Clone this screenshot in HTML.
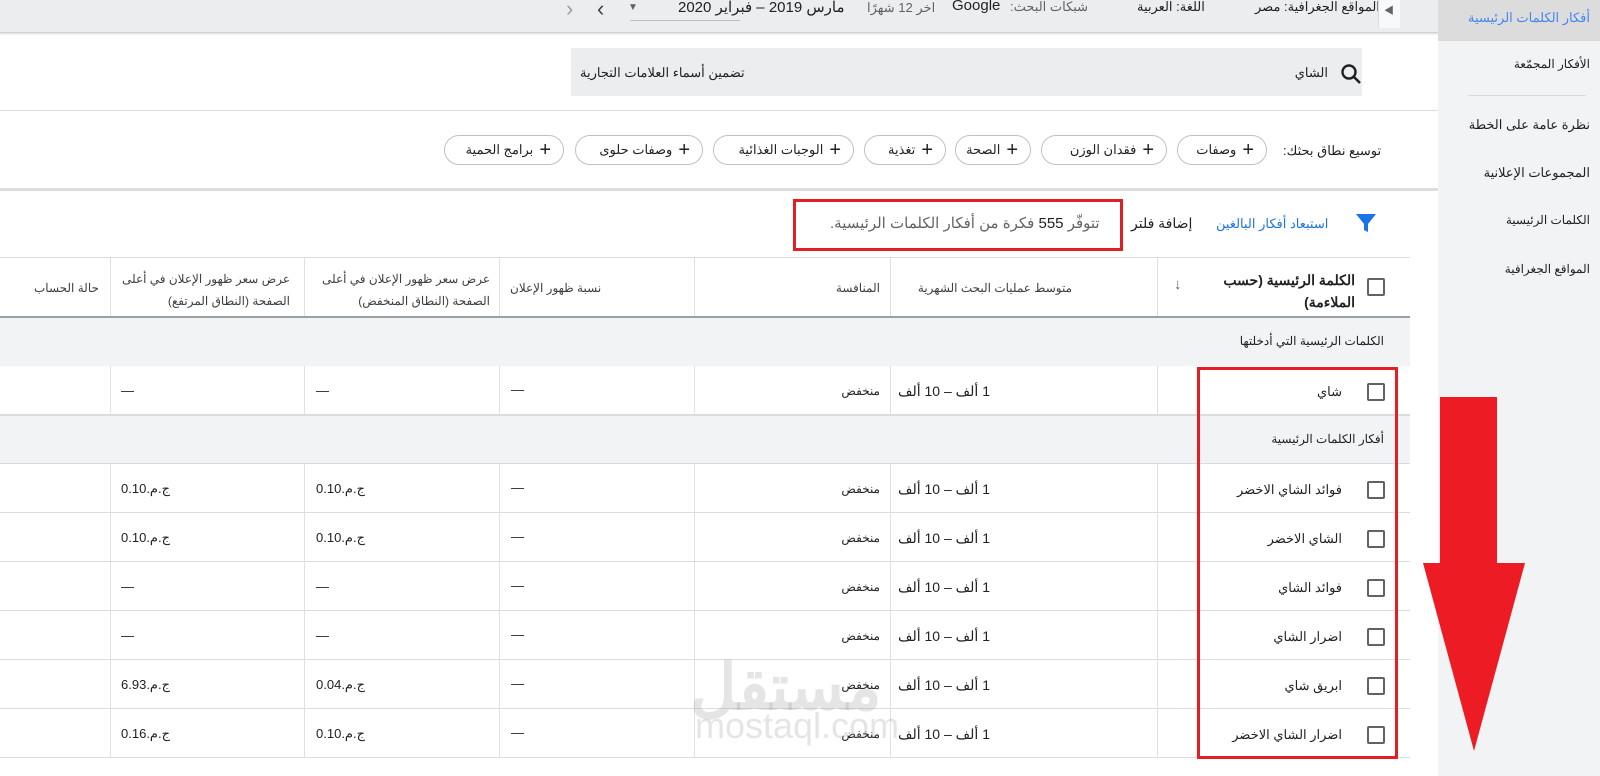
<!DOCTYPE html>
<html><head><meta charset="utf-8"><style>
*{margin:0;padding:0;box-sizing:border-box}
body{width:1600px;height:776px;overflow:hidden;background:#f1f3f4;font-family:"Liberation Sans","Noto Sans CJK SC",sans-serif;color:#202124;position:relative}
.a{position:absolute}
.t{position:absolute;white-space:nowrap;direction:rtl;font-size:13px}
.hl{position:absolute;height:1px;background:#dadce0}
.vl{position:absolute;width:1px;background:#e0e0e0}
.cb{position:absolute;width:18px;height:18px;border:2px solid #5f6368;border-radius:2px;background:#fff}
.chip{position:absolute;height:30px;top:135px;border:1px solid #bdc1c6;border-radius:16px;background:#fff;font-size:13px;direction:rtl;padding:0 12px;line-height:28px;white-space:nowrap}
.chip b{font-size:20px;font-weight:normal;margin-left:6px;vertical-align:-2px}
</style></head><body>
<div class="a" style="left:0;top:0;width:1438px;height:776px;background:#fff"></div>
<div class="a" style="left:0;top:0;width:1438px;height:33px;background:#ecedee;border-bottom:1px solid #cfd1d4;box-shadow:0 1px 2px rgba(0,0,0,.15)"></div>
<div class="t" style="left:566px;top:-4px;font-size:22px;color:#9aa0a6">&lsaquo;</div>
<div class="t" style="left:597px;top:-4px;font-size:22px;color:#3c4043">&rsaquo;</div>
<div class="t" style="left:628px;top:2px;font-size:10px;color:#5f6368">▼</div>
<div class="a" style="left:630px;top:20px;width:110px;height:1px;background:#bdc1c6"></div>
<div class="t" style="left:678px;top:-2px;font-size:15px">مارس 2019 – فبراير 2020</div>
<div class="t" style="left:867px;top:0px;font-size:13px;color:#5f6368">اخر 12 شهرًا</div>
<div class="t" style="left:952px;top:-3px;font-size:15px">Google</div>
<div class="t" style="left:1010px;top:-1px;font-size:13px;color:#5f6368">شبكات البحث:</div>
<div class="t" style="left:1137px;top:-1px;font-size:13px">اللغة: العربية</div>
<div class="t" style="left:1255px;top:-1px;font-size:13px">المواقع الجغرافية: مصر</div>
<div class="a" style="left:1378px;top:0;width:22px;height:28px;background:#f8f9fa;border-left:1px solid #dadce0"></div>
<div class="t" style="left:1384px;top:2px;font-size:10px;color:#5f6368">◀</div>
<div class="a" style="left:571px;top:48px;width:791px;height:48px;background:#ecedee"></div>
<svg class="a" style="left:1339px;top:62px" width="24" height="24" viewBox="0 0 24 24"><circle cx="10" cy="10" r="6.5" fill="none" stroke="#202124" stroke-width="2.4"/><path d="M15 15l6 6" stroke="#202124" stroke-width="2.6"/></svg>
<div class="t" style="right:272px;top:65px">الشاي</div>
<div class="t" style="left:580px;top:65px">تضمين أسماء العلامات التجارية</div>
<div class="hl" style="left:0;top:110px;width:1438px"></div>
<div class="t" style="left:1283px;top:143px">توسيع نطاق بحثك:</div>
<div class="chip" style="left:1177px;width:90px"><b>+</b>وصفات</div>
<div class="chip" style="left:1041px;width:126px"><b>+</b>فقدان الوزن</div>
<div class="chip" style="left:955px;width:76px"><b>+</b>الصحة</div>
<div class="chip" style="left:864px;width:82px"><b>+</b>تغذية</div>
<div class="chip" style="left:713px;width:141px"><b>+</b>الوجبات الغذائية</div>
<div class="chip" style="left:575px;width:128px"><b>+</b>وصفات حلوى</div>
<div class="chip" style="left:444px;width:120px"><b>+</b>برامج الحمية</div>
<div class="a" style="left:0;top:188px;width:1438px;height:3px;background:#dadce0"></div>
<svg class="a" style="left:1355px;top:212px" width="22" height="22" viewBox="0 0 22 22"><path d="M1 2h20l-8 10v8l-4-2v-6z" fill="#1a73e8"/></svg>
<div class="t" style="left:1216px;top:216px;color:#1a73e8">استبعاد أفكار البالغين</div>
<div class="t" style="left:1131px;top:215px;font-size:14px">إضافة فلتر</div>
<div class="t" style="left:830px;top:214px;font-size:15px;color:#5f6368">تتوفّر <span style="color:#202124">555</span> فكرة من أفكار الكلمات الرئيسية.</div>
<div class="a" style="left:793px;top:199px;width:330px;height:52px;border:3px solid #e31e24"></div>
<div class="hl" style="left:0;top:257px;width:1410px"></div>
<div class="a" style="left:0;top:316px;width:1410px;height:2px;background:#9aa0a6"></div>
<div class="vl" style="left:110px;top:258px;height:58px"></div>
<div class="vl" style="left:304px;top:258px;height:58px"></div>
<div class="vl" style="left:499px;top:258px;height:58px"></div>
<div class="vl" style="left:694px;top:258px;height:58px"></div>
<div class="vl" style="left:890px;top:258px;height:58px"></div>
<div class="vl" style="left:1157px;top:258px;height:58px"></div>
<div class="cb" style="left:1367px;top:278px"></div>
<div class="t" style="right:245px;top:269px;font-size:14px;font-weight:bold;line-height:22px">الكلمة الرئيسية (حسب<br>الملاءمة)</div>
<div class="t" style="left:1174px;top:276px;font-size:15px;color:#5f6368">↓</div>
<div class="t" style="right:528px;top:281px;font-size:12px;color:#3c4043">متوسط عمليات البحث الشهرية</div>
<div class="t" style="right:720px;top:281px;font-size:12px;color:#3c4043">المنافسة</div>
<div class="t" style="left:510px;top:281px;font-size:12px;color:#3c4043">نسبة ظهور الإعلان</div>
<div class="t" style="right:1110px;top:268px;font-size:12px;color:#3c4043;line-height:22px">عرض سعر ظهور الإعلان في أعلى<br>الصفحة (النطاق المنخفض)</div>
<div class="t" style="right:1310px;top:268px;font-size:12px;color:#3c4043;line-height:22px">عرض سعر ظهور الإعلان في أعلى<br>الصفحة (النطاق المرتفع)</div>
<div class="t" style="left:34px;top:281px;font-size:12px;color:#3c4043">حالة الحساب</div>
<div class="a" style="left:0;top:318px;width:1410px;height:48px;background:#f1f3f4"></div>
<div class="t" style="right:216px;top:334px;font-size:12px">الكلمات الرئيسية التي أدخلتها</div>
<div class="a" style="left:0;top:415px;width:1410px;height:49px;background:#f1f3f4;border-top:1px solid #dadce0;border-bottom:1px solid #dadce0"></div>
<div class="t" style="right:216px;top:432px;font-size:12px">أفكار الكلمات الرئيسية</div>
<div id="rows"></div>
<script>
var rows=[[366,'شاي','—','—'],[464,'فوائد الشاي الاخضر','ج.م.0.10','ج.م.0.10'],[513,'الشاي الاخضر','ج.م.0.10','ج.م.0.10'],[562,'فوائد الشاي','—','—'],[611,'اضرار الشاي','—','—'],[660,'ابريق شاي','ج.م.0.04','ج.م.6.93'],[709,'اضرار الشاي الاخضر','ج.م.0.10','ج.م.0.16']];
var h='';rows.forEach(function(r){var y=r[0];
h+='<div class="hl" style="left:0;top:'+(y+48)+'px;width:1410px"></div>';
[110,304,499,694,890,1157].forEach(function(x){h+='<div class="vl" style="left:'+x+'px;top:'+y+'px;height:49px"></div>'});
h+='<div class="cb" style="left:1367px;top:'+(y+17)+'px"></div>';
h+='<div class="t" style="right:258px;top:'+(y+18)+'px">'+r[1]+'</div>';
h+='<div class="t" style="right:610px;top:'+(y+17)+'px;font-size:14px">1 ألف – 10 ألف</div>';
h+='<div class="t" style="right:720px;top:'+(y+18)+'px;font-size:12px">منخفض</div>';
h+='<div class="t" style="left:511px;top:'+(y+16)+'px">—</div>';
h+='<div class="t" style="left:316px;top:'+(y+17)+'px">'+r[2]+'</div>';
h+='<div class="t" style="left:121px;top:'+(y+17)+'px">'+r[3]+'</div>';
});document.getElementById('rows').innerHTML=h;
</script>
<div class="a" style="left:1197px;top:367px;width:201px;height:392px;border:3px solid #e31e24"></div>
<div class="t" style="left:690px;top:650px;font-size:64px;font-weight:bold;color:rgba(150,150,150,.25)">مستقل</div>
<div class="t" style="left:695px;top:705px;font-size:36px;color:rgba(150,150,150,.25);direction:ltr">mostaql.com</div>
<div class="a" style="left:1438px;top:0;width:162px;height:41px;background:#dcdcdc"></div>
<div class="t" style="right:10px;top:10px;color:#4285f4">أفكار الكلمات الرئيسية</div>
<div class="t" style="right:10px;top:57px;font-size:12px">الأفكار المجمّعة</div>
<div class="a" style="left:1468px;top:95px;width:118px;height:1px;background:#dadce0"></div>
<div class="t" style="right:10px;top:117px">نظرة عامة على الخطة</div>
<div class="t" style="right:10px;top:165px">المجموعات الإعلانية</div>
<div class="t" style="right:10px;top:213px;font-size:12px">الكلمات الرئيسية</div>
<div class="t" style="right:10px;top:262px;font-size:12px">المواقع الجغرافية</div>
<svg class="a" style="left:1420px;top:395px" width="108" height="358" viewBox="0 0 108 358"><path d="M20 2h57v166h28l-51 188l-51-188h17z" fill="#ed1c24"/></svg>
</body></html>
